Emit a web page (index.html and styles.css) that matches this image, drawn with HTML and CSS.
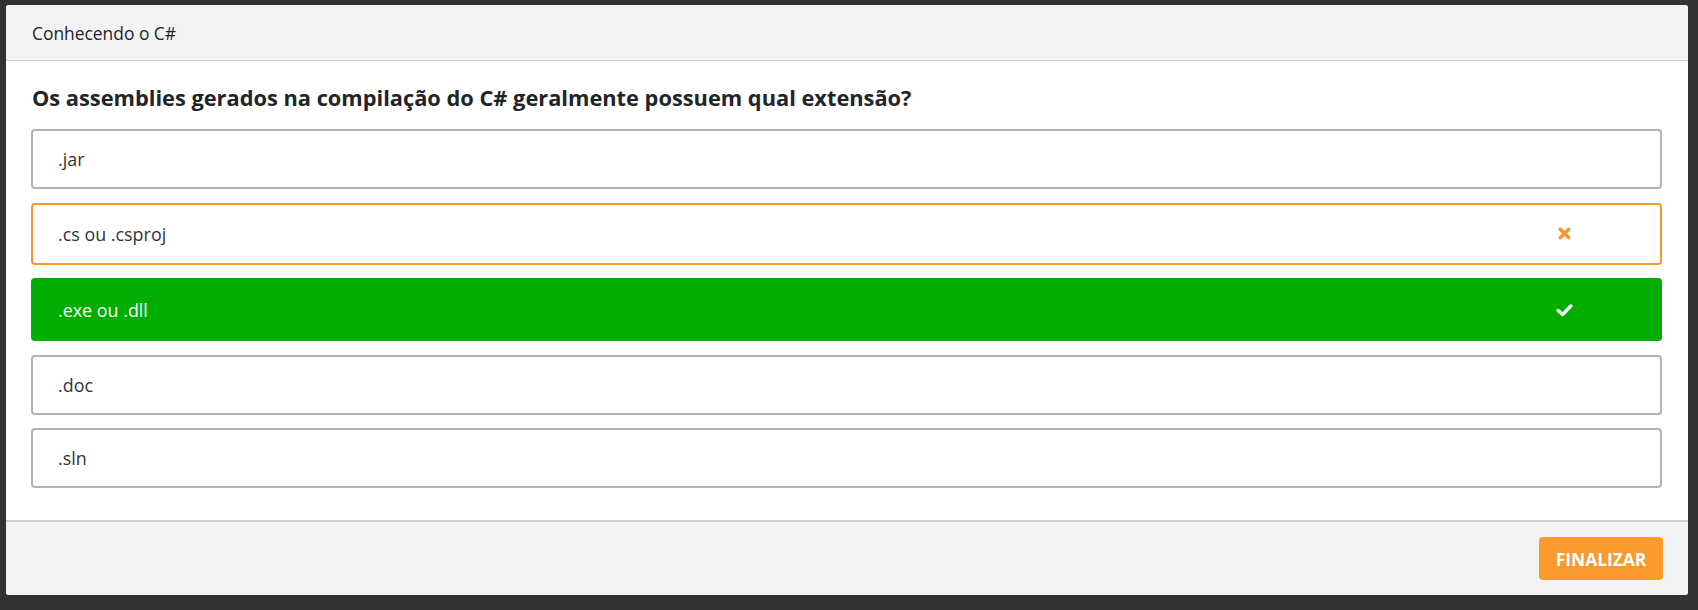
FILE: index.html
```html
<!DOCTYPE html>
<html lang="pt-BR">
<head>
<meta charset="utf-8">
<title>Conhecendo o C#</title>
<link rel="stylesheet" href="styles.css">
</head>
<body>
<div class="card">
  <div class="card-header">Conhecendo o C#</div>
  <div class="card-body">
    <h2 class="question">Os assemblies gerados na compilação do C# geralmente possuem qual extensão?</h2>
    <ul class="options">
      <li class="option"><span class="option-text">.jar</span></li>
      <li class="option option-wrong"><span class="option-text">.cs ou .csproj</span>
        <span class="option-icon">
          <svg width="13" height="13" viewBox="0 0 13 13"><path d="M2.2 2.2 L10.8 10.8 M10.8 2.2 L2.2 10.8" stroke="#f7962d" stroke-width="3.4" stroke-linecap="round"/></svg>
        </span>
      </li>
      <li class="option option-right"><span class="option-text">.exe ou .dll</span>
        <span class="option-icon">
          <svg width="17" height="14" viewBox="0 0 17 14"><path d="M2.2 7.5 L6.5 11.6 L14.8 3" fill="none" stroke="#fff" stroke-width="3.5" stroke-linecap="round" stroke-linejoin="round"/></svg>
        </span>
      </li>
      <li class="option"><span class="option-text">.doc</span></li>
      <li class="option"><span class="option-text">.sln</span></li>
    </ul>
  </div>
  <div class="card-footer">
    <button class="btn-finish" type="button">FINALIZAR</button>
  </div>
</div>
</body>
</html>
```
FILE: styles.css
```css
html, body {
  margin: 0;
  padding: 0;
  background: #323232;
  height: 610px;
  overflow: hidden;
}
body {
  font-family: "Open Sans", "Noto Sans", sans-serif;
  color: #212529;
  padding: 5px 10px 15px 6px;
  box-sizing: border-box;
}
.card {
  background: #fff;
  border-radius: 3px;
  height: 590px;
  display: flex;
  flex-direction: column;
  overflow: hidden;
}
.card-header {
  background: #f2f3f5;
  border-bottom: 1px solid #cdd0d4;
  display: flex;
  align-items: center;
  padding-left: 26px;
  padding-top: 1px;
  box-sizing: border-box;
  height: 56px;
  font-size: 17.4px;
}
.card-body {
  flex: 1;
  padding: 24px 26px 0 25px;
}
.question {
  margin: 0 0 18px 1px;
  font-size: 21.8px;
  font-weight: 700;
  line-height: 26px;
  color: #212529;
}
.options {
  list-style: none;
  margin: 0;
  padding: 0;
}
.option {
  height: 60px;
  box-sizing: border-box;
  border: 2px solid #adb3bb;
  border-radius: 4px;
  margin-bottom: 13.5px;
  display: flex;
  align-items: center;
  padding-left: 25px;
  font-size: 17.9px;
  color: #333;
}
.option-text {
  flex: 1;
}
.option-icon {
  width: 20px;
  display: flex;
  justify-content: center;
  margin-right: 86px;
}
.option-wrong {
  height: 62px;
  border-color: #f7962d;
}
.option-right {
  height: 63px;
  background: #00ad00;
  border-color: #00ad00;
  color: #fff;
}
.card-footer {
  background: #f2f3f5;
  border-top: 2px solid #cdd0d4;
  height: 75px;
  box-sizing: border-box;
  display: flex;
  justify-content: flex-end;
  align-items: flex-start;
  padding: 15px 25px 0 0;
}
.btn-finish {
  background: #fb9a2c;
  color: #fff;
  border: none;
  border-radius: 4px;
  width: 124px;
  height: 43px;
  font-family: "Open Sans", "Noto Sans", sans-serif;
  font-weight: 700;
  font-size: 17.4px;
  padding: 0;
}
```
